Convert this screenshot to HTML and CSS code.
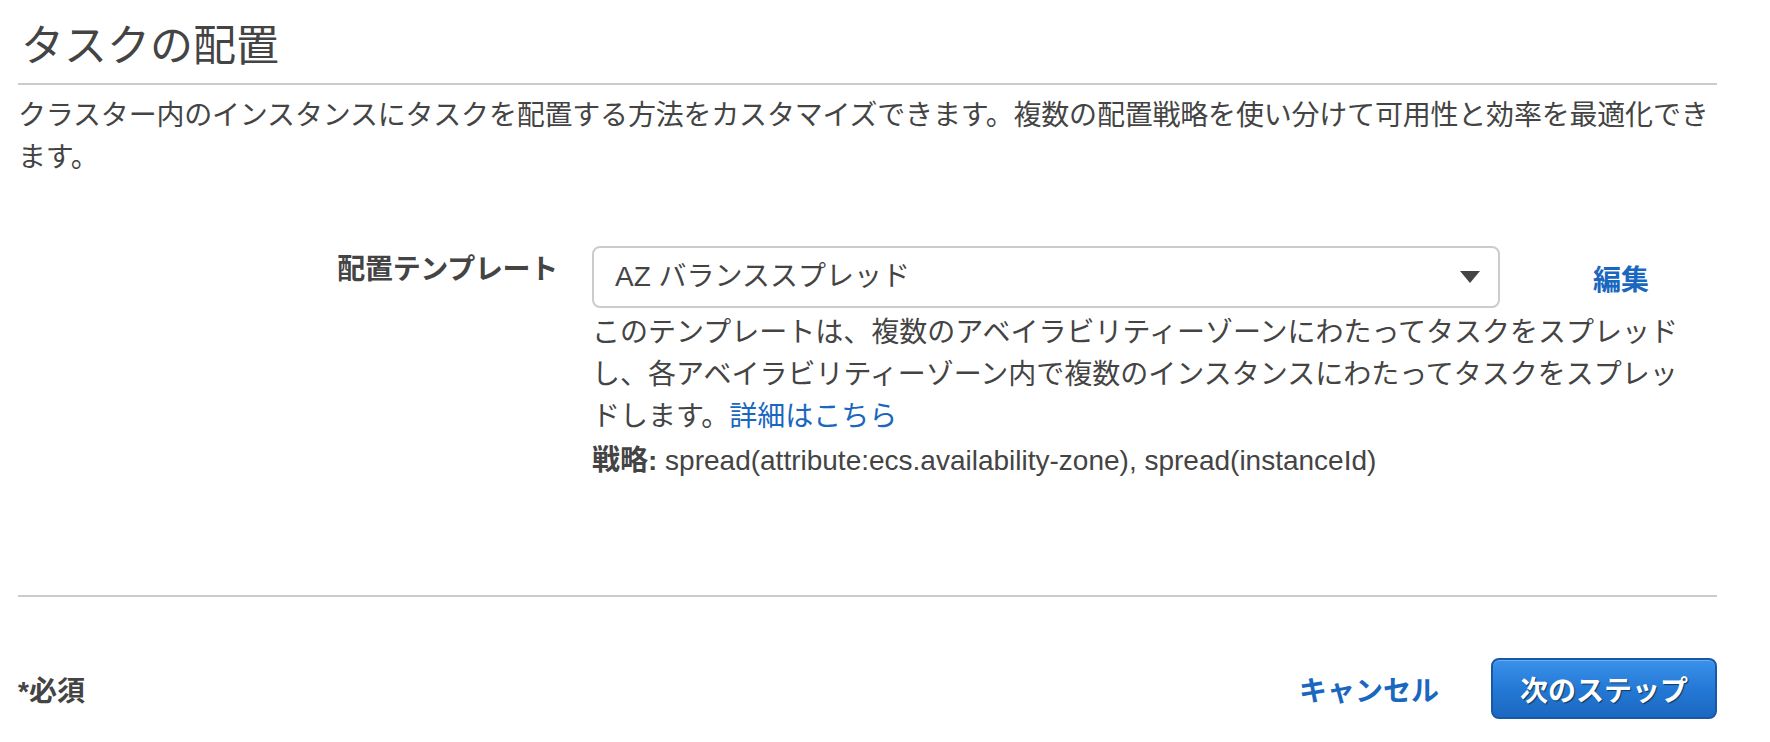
FILE: index.html
```html
<!DOCTYPE html>
<html lang="ja">
<head>
<meta charset="utf-8">
<title>タスクの配置</title>
<link rel="stylesheet" href="styles.css">
</head>
<body>
<div class="page">
  <h1 class="title">タスクの配置</h1>
  <p class="desc">クラスター内のインスタンスにタスクを配置する方法をカスタマイズできます。複数の配置戦略を使い分けて可用性と効率を最適化できます。</p>

  <div class="form-row">
    <div class="label">配置テンプレート</div>
    <div class="field">
      <div class="select">
        <span class="select-value">AZ バランススプレッド</span>
        <svg class="caret" width="20" height="12" viewBox="0 0 20 12"><polygon points="0,0 20,0 10,12" fill="#444"/></svg>
      </div>
      <p class="help">このテンプレートは、複数のアベイラビリティーゾーンにわたってタスクをスプレッドし、各アベイラビリティーゾーン内で複数のインスタンスにわたってタスクをスプレッドします。<a class="link" href="#">詳細はこちら</a></p>
      <p class="strategy"><b class="strong">戦略:</b> spread(attribute:ecs.availability-zone), spread(instanceId)</p>
    </div>
    <a class="edit" href="#">編集</a>
  </div>

  <div class="footer">
    <span class="required">*必須</span>
    <a class="cancel" href="#">キャンセル</a>
    <button class="primary" type="button">次のステップ</button>
  </div>
</div>
</body>
</html>
```

FILE: styles.css
```css
html, body {
  margin: 0;
  padding: 0;
  background: #fff;
}

body {
  font-family: "Liberation Sans", "Noto Sans CJK JP", sans-serif;
  font-size: 28px;
  color: #444;
}

.page {
  padding: 0 53px 0 18px;
}

.title {
  margin: 0;
  padding: 17px 0 8px 3px;
  font-size: 43px;
  font-weight: 400;
  line-height: 58px;
  border-bottom: 2px solid #ccc;
}

.desc {
  margin: 10px 0 0;
  line-height: 42px;
  letter-spacing: -0.2px;
}

.form-row {
  display: flex;
  align-items: flex-start;
  margin-top: 67px;
}

.label {
  width: 540px;
  margin-right: 34px;
  margin-top: 3px;
  text-align: right;
  font-weight: 700;
  line-height: 42px;
  letter-spacing: -0.3px;
}

.field {
  width: 908px;
}

.select {
  box-sizing: border-box;
  height: 62px;
  border: 2px solid #ccc;
  border-radius: 8px;
  display: flex;
  align-items: center;
  justify-content: space-between;
  padding: 0 18px 0 21px;
}

.select-value {
  line-height: 42px;
}

.caret {
  display: block;
}

.help {
  margin: 4px 0 0;
  width: 1100px;
  line-height: 42px;
}

.link {
  color: #1a67c0;
  text-decoration: none;
}

.strategy {
  margin: 2px 0 0;
  width: 1100px;
  line-height: 42px;
}

.strong {
  font-weight: 700;
}

.edit {
  margin-left: 93px;
  margin-top: 4px;
  line-height: 62px;
  font-weight: 700;
  color: #1a67c0;
  text-decoration: none;
}

.footer {
  display: flex;
  align-items: center;
  margin-top: 113px;
  border-top: 2px solid #ccc;
  padding-top: 61px;
}

.required {
  font-weight: 700;
}

.cancel {
  margin-left: auto;
  margin-right: 52px;
  font-weight: 700;
  color: #1a67c0;
  text-decoration: none;
}

.primary {
  box-sizing: border-box;
  width: 226px;
  height: 61px;
  padding: 0;
  border: 2px solid #1759a6;
  border-radius: 8px;
  background: linear-gradient(to bottom, #3a92ea 0%, #2479d6 50%, #1b68c0 100%);
  box-shadow: inset 0 1px 0 rgba(255, 255, 255, 0.25);
  color: #fff;
  font-family: "Liberation Sans", "Noto Sans CJK JP", sans-serif;
  font-size: 28px;
  font-weight: 700;
  text-shadow: 1px 1px 1px rgba(0, 0, 0, 0.55);
  cursor: pointer;
}
```
